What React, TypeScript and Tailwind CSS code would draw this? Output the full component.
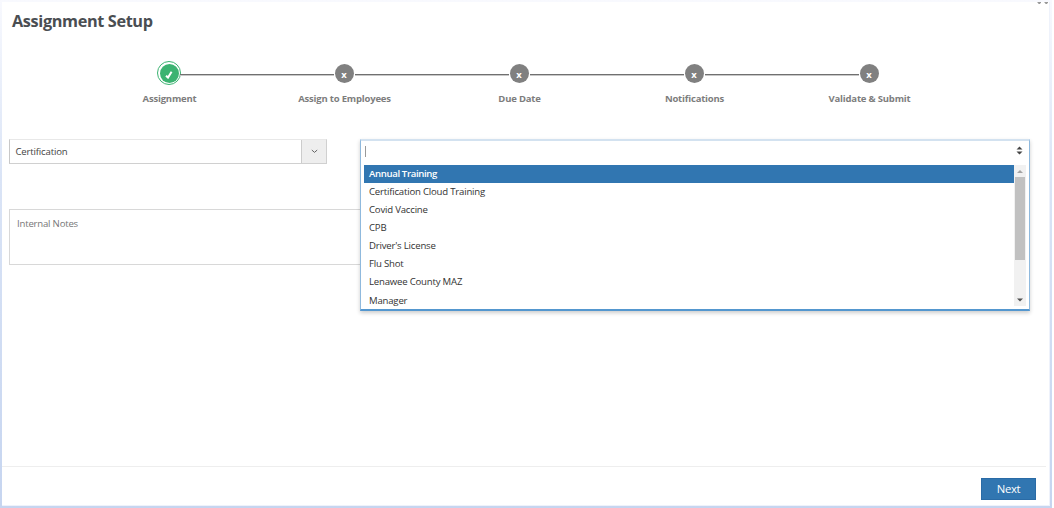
import clsx from 'clsx'

const steps = [
  { label: 'Assignment', done: true },
  { label: 'Assign to Employees', done: false },
  { label: 'Due Date', done: false },
  { label: 'Notifications', done: false },
  { label: 'Validate & Submit', done: false }
]

const options = [
  'Annual Training',
  'Certification Cloud Training',
  'Covid Vaccine',
  'CPB',
  "Driver's License",
  'Flu Shot',
  'Lenawee County MAZ',
  'Manager'
]

function StepMarker({ done }: { done: boolean }) {
  if (done) {
    return <div className="flex size-6 shrink-0 items-center justify-center rounded-full border border-[#3bb371] bg-white">
      <div className="flex size-[19px] items-center justify-center rounded-full bg-[#3bb371]">
        <svg width="8" height="8" viewBox="0 0 8 8" className="mt-[3px]" fill="none" stroke="white" strokeWidth="2">
          <path d="M1 4.8 3 6.6 6.6 0.8" />
        </svg>
      </div>
    </div>
  }
  return <div className="flex size-6 shrink-0 items-center justify-center">
    <div className="flex size-[19px] items-center justify-center rounded-full bg-[#808080] pt-[3px] text-[9.5px] leading-none font-bold text-white">x</div>
  </div>
}

function Step({ label, done, first, last }: { label: string, done: boolean, first: boolean, last: boolean }) {
  return (
    <li className="flex w-[175px] flex-col items-center">
      <div className="flex w-full items-center">
        <div className={clsx('mt-[3px] -mr-[2px] h-[1px] grow', !first && 'bg-[#707070] shadow-[0_1px_0_#c8c8c8]')} />
        <StepMarker done={done} />
        <div className={clsx('mt-[3px] -ml-[1px] h-[1px] grow', !last && 'bg-[#707070] shadow-[0_1px_0_#c8c8c8]')} />
      </div>
      <div className="mt-[7px] text-[9.5px] leading-[14px] font-bold tracking-[-0.19px] whitespace-nowrap text-[#7d7d7d]">{label}</div>
    </li>
  )
}

function TypeSelect() {
  return (
    <div className="flex h-[25px] w-[318px] border border-t-[#e8e8e8] border-r-[#d0d0d0] border-b-[#d0d0d0] border-l-[#c8c8c8]">
      <div className="grow pl-[5.5px] text-[9.6px] leading-[24px] tracking-[-0.18px] text-[#444]">Certification</div>
      <div className="flex w-[25px] items-center justify-center border-l border-[#ccc] bg-[#eee]">
        <svg width="7" height="5" viewBox="0 0 7 5" fill="none" stroke="#666" strokeWidth="1">
          <path d="M0.8 1 3.5 3.4 6.2 1" />
        </svg>
      </div>
    </div>
  )
}

function Scrollbar() {
  return (
    <div className="flex w-3 flex-col items-center bg-[#f1f1f1]">
      <svg width="12" height="12" viewBox="0 0 12 12" className="shrink-0">
        <path d="M3 8 6 5 9 8Z" fill="#a3a3a3" />
      </svg>
      <div className="h-[83px] w-[10px] bg-[#c1c1c1]" />
      <svg width="12" height="12" viewBox="0 0 12 12" className="mt-auto shrink-0">
        <path d="M3 4.5 6 7.5 9 4.5Z" fill="#505050" />
      </svg>
    </div>
  )
}

function CertificationPicker() {
  return (
    <div className="absolute top-0 left-[351px] flex h-[172px] w-[670px] flex-col border border-t-2 border-b-2 border-t-[#d3e2f0] border-r-[#8fb9dd] border-b-[#5497cf] border-l-[#8fb9dd] bg-white shadow-[0_2px_4px_rgba(0,0,0,0.2)]">
      <div className="flex h-6 shrink-0 items-start justify-between pt-1 pr-1.5 pl-1">
        <div className="mt-[1px] h-[11px] w-px bg-[#999]" />
        <svg width="7" height="9" viewBox="0 0 7 9" className="mt-[1px]" fill="#444">
          <path d="M0.5 3.5 3.5 0.5 6.5 3.5ZM0.5 5.5 3.5 8.5 6.5 5.5Z" />
        </svg>
      </div>
      <div className="mr-[3px] ml-[3px] flex h-[141px] overflow-hidden">
        <ul className="grow">
          {options.map((option, i) => (
            <li
              key={option}
              className={clsx(
                'h-[18.08px] pl-[5px] text-[9.6px] leading-[18px]',
                i === 0 ? 'bg-[#3176b1] font-semibold tracking-[-0.36px] text-white' : 'tracking-[-0.2px] text-[#333]'
              )}
            >
              {option}
            </li>
          ))}
        </ul>
        <Scrollbar />
      </div>
    </div>
  )
}

function WindowDots() {
  return <svg width="12" height="4" viewBox="0 0 12 4" className="absolute top-[1px] right-[5px]" fill="#999">
    <path d="M0.5 1h3.5v1h-3.5zM1.3 2h2v1h-2zM7.5 1h3.5v1h-3.5zM8.3 2h2v1h-2z" />
  </svg>
}

export default function App() {
  return (
    <div className="relative h-[508px] w-[1054px] bg-white font-['Open_Sans',sans-serif]">
      <div className="flex h-full w-[1052px] bg-linear-to-b from-[#f8f9fe] via-[#dae4f6] via-35% to-[#c6d5f0] p-[2px]">
        <div className="flex w-full flex-col border-r border-b border-[#eef2fb] bg-white">
          <h1 className="mt-[7px] ml-[10px] text-[16.3px] leading-6 font-bold tracking-[-0.37px] text-[#4a4e52]">Assignment Setup</h1>
          <ol className="mt-[28px] ml-[80px] flex">
            {steps.map((step, i) => (
              <Step key={step.label} {...step} first={i === 0} last={i === steps.length - 1} />
            ))}
          </ol>
          <div className="relative mt-[33px] ml-[7px] w-[1021px]">
            <TypeSelect />
            <div className="mt-[45px] h-14 w-full border border-[#d8d8d8] px-[7px] pt-[7px] text-[9.6px] leading-[14px] tracking-[-0.2px] text-[#777]">Internal Notes</div>
            <CertificationPicker />
          </div>
          <div className="mt-auto mr-[3px] flex h-[39px] justify-end border-t border-[#eee] pt-[11px] pr-[10px]">
            <button className="flex h-[22px] w-[55px] items-center justify-center border border-[#2a6ba6] bg-[#3176b1] text-[11.3px] tracking-[-0.3px] text-white">Next</button>
          </div>
        </div>
      </div>
      <WindowDots />
    </div>
  )
}
